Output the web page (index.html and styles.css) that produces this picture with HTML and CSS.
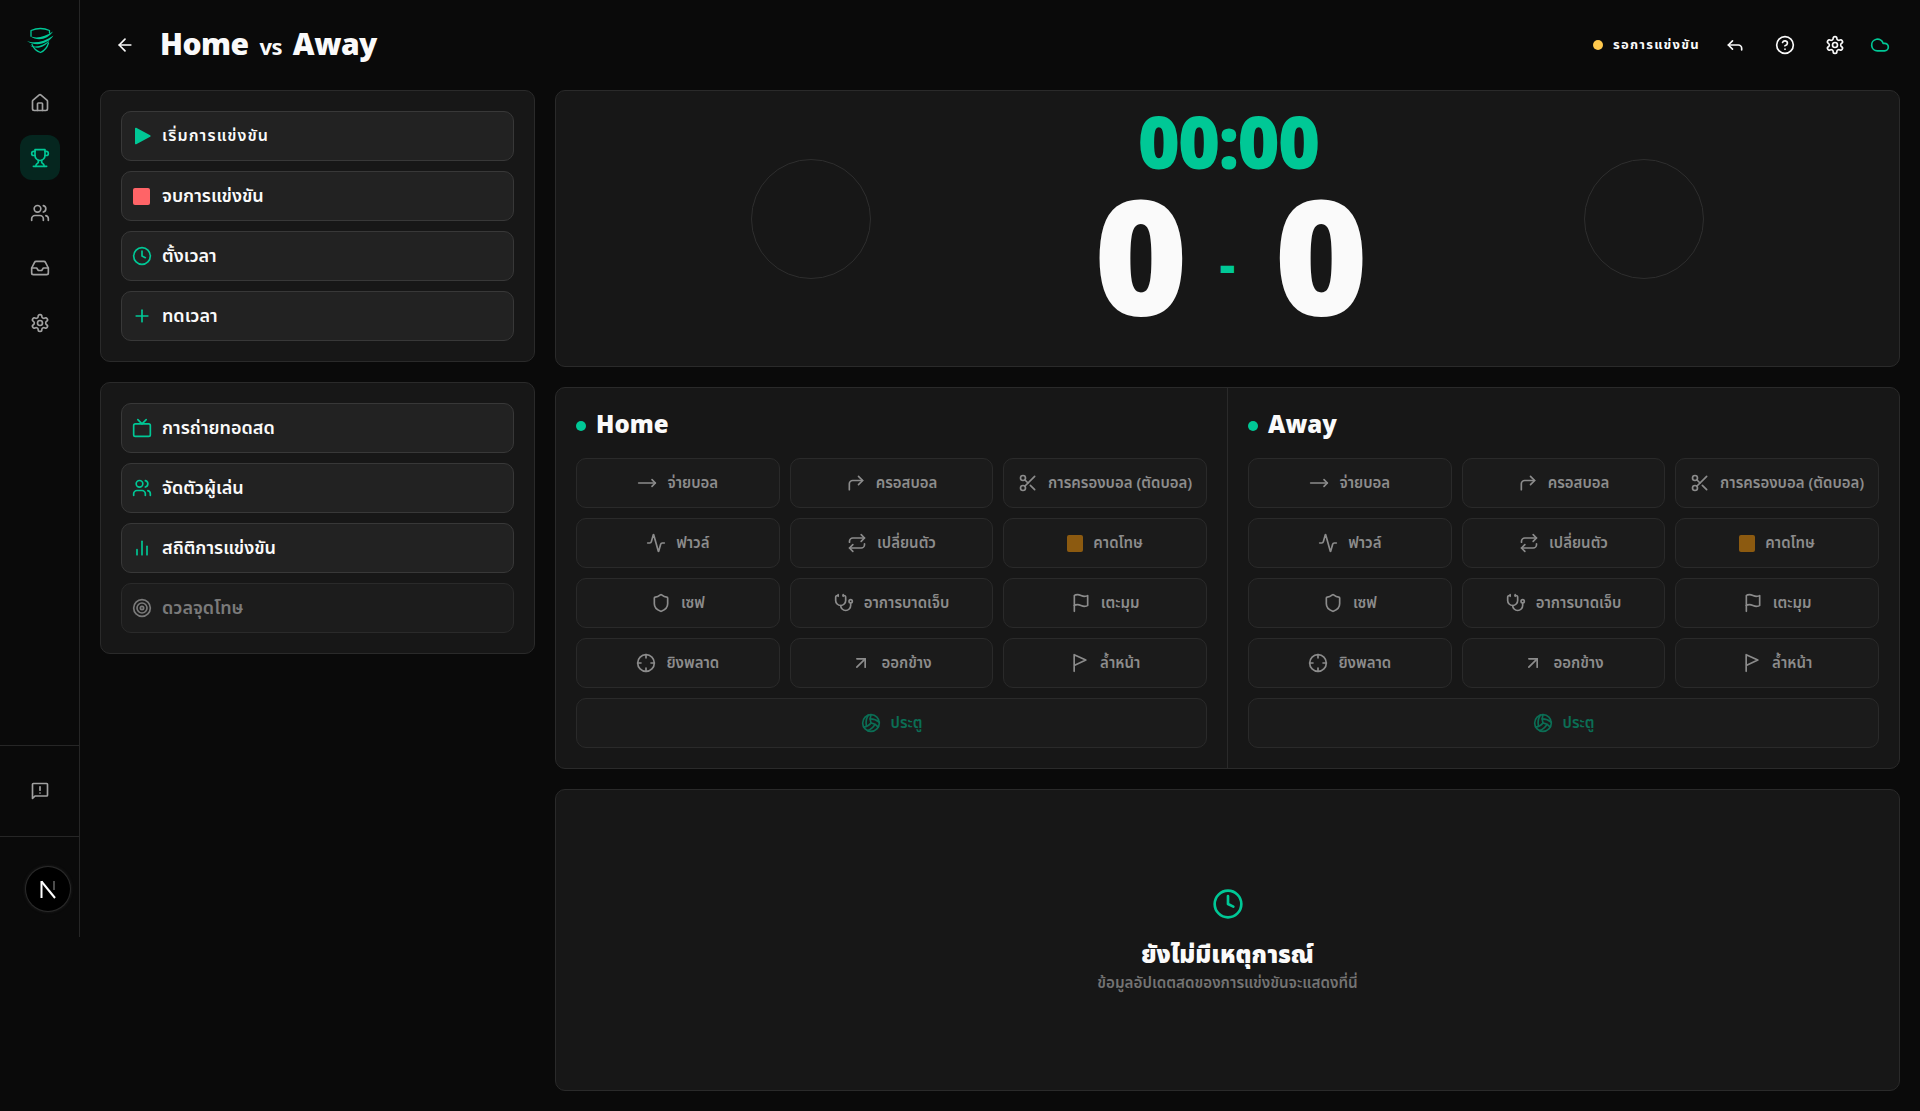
FILE: index.html
```html
<!DOCTYPE html>
<html lang="th">
<head>
  <meta charset="UTF-8">
  <meta name="viewport" content="width=device-width, initial-scale=1.0">
  <title>Home vs Away</title>
  <link rel="stylesheet" href="styles.css">
</head>
<body>

  <!-- Icon sprite -->
  <svg class="sprite" xmlns="http://www.w3.org/2000/svg">
    <symbol id="i-home" viewBox="0 0 24 24"><path d="M15 21v-8a1 1 0 0 0-1-1h-4a1 1 0 0 0-1 1v8"/><path d="M3 10a2 2 0 0 1 .709-1.528l7-5.999a2 2 0 0 1 2.582 0l7 5.999A2 2 0 0 1 21 10v9a2 2 0 0 1-2 2H5a2 2 0 0 1-2-2z"/></symbol>
    <symbol id="i-trophy" viewBox="0 0 24 24"><path d="M6 9H4.5a2.5 2.5 0 0 1 0-5H6"/><path d="M18 9h1.5a2.5 2.5 0 0 0 0-5H18"/><path d="M4 22h16"/><path d="M10 14.66V17c0 .55-.47.98-.97 1.21C7.85 18.75 7 20.24 7 22"/><path d="M14 14.66V17c0 .55.47.98.97 1.21C16.15 18.75 17 20.24 17 22"/><path d="M18 2H6v7a6 6 0 0 0 12 0V2Z"/></symbol>
    <symbol id="i-users" viewBox="0 0 24 24"><path d="M16 21v-2a4 4 0 0 0-4-4H6a4 4 0 0 0-4 4v2"/><circle cx="9" cy="7" r="4"/><path d="M22 21v-2a4 4 0 0 0-3-3.87"/><path d="M16 3.13a4 4 0 0 1 0 7.75"/></symbol>
    <symbol id="i-inbox" viewBox="0 0 24 24"><polyline points="22 12 16 12 14 15 10 15 8 12 2 12"/><path d="M5.45 5.11 2 12v6a2 2 0 0 0 2 2h16a2 2 0 0 0 2-2v-6l-3.45-6.89A2 2 0 0 0 16.76 4H7.24a2 2 0 0 0-1.79 1.11z"/></symbol>
    <symbol id="i-settings" viewBox="0 0 24 24"><path d="M12.22 2h-.44a2 2 0 0 0-2 2v.18a2 2 0 0 1-1 1.73l-.43.25a2 2 0 0 1-2 0l-.15-.08a2 2 0 0 0-2.73.73l-.22.38a2 2 0 0 0 .73 2.73l.15.1a2 2 0 0 1 1 1.72v.51a2 2 0 0 1-1 1.74l-.15.09a2 2 0 0 0-.73 2.73l.22.38a2 2 0 0 0 2.73.73l.15-.08a2 2 0 0 1 2 0l.43.25a2 2 0 0 1 1 1.73V20a2 2 0 0 0 2 2h.44a2 2 0 0 0 2-2v-.18a2 2 0 0 1 1-1.73l.43-.25a2 2 0 0 1 2 0l.15.08a2 2 0 0 0 2.73-.73l.22-.39a2 2 0 0 0-.73-2.73l-.15-.08a2 2 0 0 1-1-1.74v-.5a2 2 0 0 1 1-1.74l.15-.09a2 2 0 0 0 .73-2.73l-.22-.38a2 2 0 0 0-2.73-.73l-.15.08a2 2 0 0 1-2 0l-.43-.25a2 2 0 0 1-1-1.73V4a2 2 0 0 0-2-2z"/><circle cx="12" cy="12" r="3"/></symbol>
    <symbol id="i-feedback" viewBox="0 0 24 24"><path d="M20 3H4a1 1 0 0 0-1 1v17l3-3h14a1 1 0 0 0 1-1V4a1 1 0 0 0-1-1z"/><path d="M12 7v4"/><path d="M12 14.500h.01"/></symbol>
    <symbol id="i-back" viewBox="0 0 24 24"><path d="m12 19-7-7 7-7"/><path d="M19 12H5"/></symbol>
    <symbol id="i-reply" viewBox="0 0 24 24"><polyline points="9 17 4 12 9 7"/><path d="M20 18v-2a4 4 0 0 0-4-4H4"/></symbol>
    <symbol id="i-help" viewBox="0 0 24 24"><circle cx="12" cy="12" r="10"/><path d="M9.09 9a3 3 0 0 1 5.83 1c0 2-3 3-3 3"/><path d="M12 17h.01"/></symbol>
    <symbol id="i-cloud" viewBox="0 0 24 24"><path d="M17.5 19H9a7 7 0 1 1 6.71-9h1.79a4.5 4.5 0 1 1 0 9Z"/></symbol>
    <symbol id="i-play" viewBox="0 0 24 24"><polygon points="4.600 3 21.300 12 4.600 21"/></symbol>
    <symbol id="i-clock" viewBox="0 0 24 24"><circle cx="12" cy="12" r="10"/><polyline points="12 6 12 12 16 14"/></symbol>
    <symbol id="i-plus" viewBox="0 0 24 24"><path d="M5 12h14"/><path d="M12 5v14"/></symbol>
    <symbol id="i-tv" viewBox="0 0 24 24"><rect width="20" height="15" x="2" y="7" rx="2" ry="2"/><polyline points="17 2 12 7 7 2"/></symbol>
    <symbol id="i-chart" viewBox="0 0 24 24"><line x1="18" x2="18" y1="20" y2="10"/><line x1="12" x2="12" y1="20" y2="4"/><line x1="6" x2="6" y1="20" y2="14"/></symbol>
    <symbol id="i-target" viewBox="0 0 24 24"><circle cx="12" cy="12" r="10"/><circle cx="12" cy="12" r="6"/><circle cx="12" cy="12" r="2"/></symbol>
    <symbol id="i-pass" viewBox="0 0 24 24"><path d="M18 8l4 4-4 4"/><path d="M2 12h20"/></symbol>
    <symbol id="i-cross" viewBox="0 0 24 24"><polyline points="15 14 20 9 15 4"/><path d="M4 20v-7a4 4 0 0 1 4-4h12"/></symbol>
    <symbol id="i-scissors" viewBox="0 0 24 24"><circle cx="6" cy="6" r="3"/><path d="M8.12 8.12 12 12"/><path d="M20 4 8.12 15.88"/><circle cx="6" cy="18" r="3"/><path d="M14.8 14.8 20 20"/></symbol>
    <symbol id="i-activity" viewBox="0 0 24 24"><path d="M22 12h-2.48a2 2 0 0 0-1.93 1.46l-2.35 8.36a.25.25 0 0 1-.48 0L9.24 2.18a.25.25 0 0 0-.48 0l-2.35 8.36A2 2 0 0 1 4.49 12H2"/></symbol>
    <symbol id="i-repeat" viewBox="0 0 24 24"><path d="m17 2 4 4-4 4"/><path d="M3 11v-1a4 4 0 0 1 4-4h14"/><path d="m7 22-4-4 4-4"/><path d="M21 13v1a4 4 0 0 1-4 4H3"/></symbol>
    <symbol id="i-shield" viewBox="0 0 24 24"><path d="M20 13c0 5-3.5 7.5-7.66 8.95a1 1 0 0 1-.67-.01C7.5 20.5 4 18 4 13V6a1 1 0 0 1 1-1c2 0 4.5-1.2 6.24-2.72a1.17 1.17 0 0 1 1.52 0C14.51 3.81 17 5 19 5a1 1 0 0 1 1 1z"/></symbol>
    <symbol id="i-stethoscope" viewBox="0 0 24 24"><path d="M11 2v2"/><path d="M5 2v2"/><path d="M5 3H4a2 2 0 0 0-2 2v4a6 6 0 0 0 12 0V5a2 2 0 0 0-2-2h-1"/><path d="M8 15a6 6 0 0 0 12 0v-3"/><circle cx="20" cy="10" r="2"/></symbol>
    <symbol id="i-flag" viewBox="0 0 24 24"><path d="M4 15s1-1 4-1 5 2 8 2 4-1 4-1V3s-1 1-4 1-5-2-8-2-4 1-4 1z"/><line x1="4" x2="4" y1="22" y2="15"/></symbol>
    <symbol id="i-crosshair" viewBox="0 0 24 24"><circle cx="12" cy="12" r="10"/><line x1="22" x2="18" y1="12" y2="12"/><line x1="6" x2="2" y1="12" y2="12"/><line x1="12" x2="12" y1="6" y2="2"/><line x1="12" x2="12" y1="22" y2="18"/></symbol>
    <symbol id="i-out" viewBox="0 0 24 24"><path d="M7 7h10v10"/><path d="M7 17 17 7"/></symbol>
    <symbol id="i-offside" viewBox="0 0 24 24"><path d="M5 22V2l14 6.500-14 6.500"/></symbol>
    <symbol id="i-goal" viewBox="0 0 24 24"><path d="M11.1 7.1a16.55 16.55 0 0 1 10.9 4"/><path d="M12 12a12.6 12.6 0 0 1-8.7 5"/><path d="M16.8 13.6a16.55 16.55 0 0 1-9 7.5"/><path d="M20.7 17a12.8 12.8 0 0 0-8.7-5 13.3 13.3 0 0 1 0-10"/><path d="M6.6 15.6A16.55 16.55 0 0 1 8.9 2.4"/><circle cx="12" cy="12" r="10"/></symbol>
  </svg>

  <!-- Sidebar -->
  <aside class="sidebar">
    <div class="logo">
      <svg viewBox="0 0 28 28" width="28" height="28">
        <g fill="none" stroke="#00c896" stroke-width="1.300" stroke-linecap="round" stroke-linejoin="round">
          <path d="M5 10V4.500C11 2 18 2 23.500 4.500V7"/>
          <path d="M6 18.500C7.500 22.500 10.500 25 14.500 26.500 18 25 21 22 22.500 17"/>
        </g>
        <g fill="#00c896">
          <path d="M4 10C10 13 19 11 27 5.500 22 13 12 16 4 10Z"/>
          <path d="M1 15C8 18 18 16 27.500 9.500 22 18 10 21 1 15Z"/>
          <path d="M4 19.500C11 22 18 19 23.500 14.500 19 21.500 10 24 4 19.500Z"/>
        </g>
      </svg>
    </div>
    <nav class="side-nav">
      <a class="side-link" href="#"><svg class="icon"><use href="#i-home"/></svg></a>
      <a class="side-link active" href="#"><svg class="icon"><use href="#i-trophy"/></svg></a>
      <a class="side-link" href="#"><svg class="icon"><use href="#i-users"/></svg></a>
      <a class="side-link" href="#"><svg class="icon"><use href="#i-inbox"/></svg></a>
      <a class="side-link" href="#"><svg class="icon"><use href="#i-settings"/></svg></a>
    </nav>
    <div class="side-feedback">
      <svg class="icon"><use href="#i-feedback"/></svg>
    </div>
    <div class="side-foot"></div>
  </aside>

  <!-- Dev indicator -->
  <div class="dev-badge">
    <svg viewBox="0 0 20 20" width="20" height="20" fill="none">
      <path d="M3.500 2v17" stroke="#fff" stroke-width="2"/>
      <path d="M3.500 2.500 17 19" stroke="#fff" stroke-width="2"/>
      <path d="M16 2v9" stroke="#666" stroke-width="1.500"/>
    </svg>
  </div>

  <div class="page">
    <header class="topbar">
      <div class="match-title">
        <svg class="icon back"><use href="#i-back"/></svg>
        <h1>Home <span class="vs">vs</span> Away</h1>
      </div>
      <div class="top-actions">
        <span class="status"><span class="status-dot"></span>รอการแข่งขัน</span>
        <svg class="icon"><use href="#i-reply"/></svg>
        <svg class="icon"><use href="#i-help"/></svg>
        <svg class="icon"><use href="#i-settings"/></svg>
        <svg class="icon cloud"><use href="#i-cloud"/></svg>
      </div>
    </header>

    <div class="layout">
      <!-- Left control panels -->
      <div class="left-col">
        <section class="card panel">
          <button class="ctl-btn wide-text"><svg class="icon green solid"><use href="#i-play"/></svg>เริ่มการแข่งขัน</button>
          <button class="ctl-btn"><span class="stop-square"></span>จบการแข่งขัน</button>
          <button class="ctl-btn"><svg class="icon green"><use href="#i-clock"/></svg>ตั้งเวลา</button>
          <button class="ctl-btn"><svg class="icon green"><use href="#i-plus"/></svg>ทดเวลา</button>
        </section>
        <section class="card panel">
          <button class="ctl-btn"><svg class="icon green"><use href="#i-tv"/></svg>การถ่ายทอดสด</button>
          <button class="ctl-btn"><svg class="icon green"><use href="#i-users"/></svg>จัดตัวผู้เล่น</button>
          <button class="ctl-btn"><svg class="icon green"><use href="#i-chart"/></svg>สถิติการแข่งขัน</button>
          <button class="ctl-btn disabled"><svg class="icon"><use href="#i-target"/></svg>ดวลจุดโทษ</button>
        </section>
      </div>

      <div class="right-col">
        <!-- Scoreboard -->
        <section class="card scoreboard">
          <div class="team-logo"></div>
          <div class="score-center">
            <div class="clock">00:00</div>
            <div class="score">
              <span>0</span>
              <span class="score-dash">-</span>
              <span>0</span>
            </div>
          </div>
          <div class="team-logo"></div>
        </section>

        <!-- Team event buttons -->
        <section class="card teams">
          <div class="team">
            <h2 class="team-name"><span class="team-dot"></span>Home</h2>
            <div class="event-grid">
              <button class="ev-btn"><svg class="icon"><use href="#i-pass"/></svg>จ่ายบอล</button>
              <button class="ev-btn"><svg class="icon"><use href="#i-cross"/></svg>ครอสบอล</button>
              <button class="ev-btn"><svg class="icon"><use href="#i-scissors"/></svg>การครองบอล (ตัดบอล)</button>
              <button class="ev-btn"><svg class="icon"><use href="#i-activity"/></svg>ฟาวล์</button>
              <button class="ev-btn"><svg class="icon"><use href="#i-repeat"/></svg>เปลี่ยนตัว</button>
              <button class="ev-btn"><span class="yellow-card"></span>คาดโทษ</button>
              <button class="ev-btn"><svg class="icon"><use href="#i-shield"/></svg>เซฟ</button>
              <button class="ev-btn"><svg class="icon"><use href="#i-stethoscope"/></svg>อาการบาดเจ็บ</button>
              <button class="ev-btn"><svg class="icon"><use href="#i-flag"/></svg>เตะมุม</button>
              <button class="ev-btn"><svg class="icon"><use href="#i-crosshair"/></svg>ยิงพลาด</button>
              <button class="ev-btn"><svg class="icon"><use href="#i-out"/></svg>ออกข้าง</button>
              <button class="ev-btn"><svg class="icon"><use href="#i-offside"/></svg>ล้ำหน้า</button>
              <button class="ev-btn goal"><svg class="icon"><use href="#i-goal"/></svg>ประตู</button>
            </div>
          </div>
          <div class="team">
            <h2 class="team-name"><span class="team-dot"></span>Away</h2>
            <div class="event-grid">
              <button class="ev-btn"><svg class="icon"><use href="#i-pass"/></svg>จ่ายบอล</button>
              <button class="ev-btn"><svg class="icon"><use href="#i-cross"/></svg>ครอสบอล</button>
              <button class="ev-btn"><svg class="icon"><use href="#i-scissors"/></svg>การครองบอล (ตัดบอล)</button>
              <button class="ev-btn"><svg class="icon"><use href="#i-activity"/></svg>ฟาวล์</button>
              <button class="ev-btn"><svg class="icon"><use href="#i-repeat"/></svg>เปลี่ยนตัว</button>
              <button class="ev-btn"><span class="yellow-card"></span>คาดโทษ</button>
              <button class="ev-btn"><svg class="icon"><use href="#i-shield"/></svg>เซฟ</button>
              <button class="ev-btn"><svg class="icon"><use href="#i-stethoscope"/></svg>อาการบาดเจ็บ</button>
              <button class="ev-btn"><svg class="icon"><use href="#i-flag"/></svg>เตะมุม</button>
              <button class="ev-btn"><svg class="icon"><use href="#i-crosshair"/></svg>ยิงพลาด</button>
              <button class="ev-btn"><svg class="icon"><use href="#i-out"/></svg>ออกข้าง</button>
              <button class="ev-btn"><svg class="icon"><use href="#i-offside"/></svg>ล้ำหน้า</button>
              <button class="ev-btn goal"><svg class="icon"><use href="#i-goal"/></svg>ประตู</button>
            </div>
          </div>
        </section>

        <!-- Live feed -->
        <section class="card feed">
          <svg class="icon feed-icon"><use href="#i-clock"/></svg>
          <h3>ยังไม่มีเหตุการณ์</h3>
          <p>ข้อมูลอัปเดตสดของการแข่งขันจะแสดงที่นี่</p>
        </section>
      </div>
    </div>
  </div>

</body>
</html>
```

FILE: styles.css
```css
* {
  box-sizing: border-box;
}

body {
  margin: 0;
  height: 1111px;
  overflow: hidden;
  display: flex;
  align-items: flex-start;
  background-color: #0a0a0a;
  color: #fafafa;
  font-family: "Noto Sans", "Noto Sans Thai", sans-serif;
}

.sprite {
  display: none;
}

.icon {
  width: 20px;
  height: 20px;
  flex-shrink: 0;
  fill: none;
  stroke: currentColor;
  stroke-width: 2;
  stroke-linecap: round;
  stroke-linejoin: round;
}

.icon.green {
  color: #00c896;
}

.icon.solid {
  fill: #00c896;
  stroke: #00c896;
}

/* Sidebar */
.sidebar {
  width: 80px;
  height: 937px;
  flex-shrink: 0;
  display: flex;
  flex-direction: column;
  border-right: 1px solid #262626;
}

.logo {
  height: 80px;
  padding-top: 26px;
  display: flex;
  justify-content: center;
}

.side-nav {
  flex: 1;
  display: flex;
  flex-direction: column;
  align-items: center;
  gap: 10px;
}

.side-link {
  width: 40px;
  height: 45px;
  display: flex;
  align-items: center;
  justify-content: center;
  border-radius: 12px;
  color: #a1a1a1;
}

.side-link.active {
  background: #05261f;
  color: #00c896;
}

.side-feedback {
  height: 92px;
  display: flex;
  align-items: center;
  justify-content: center;
  color: #a1a1a1;
  border-top: 1px solid #262626;
  border-bottom: 1px solid #262626;
}

.side-foot {
  height: 100px;
}

.dev-badge {
  position: fixed;
  left: 26px;
  top: 867px;
  width: 44px;
  height: 44px;
  display: flex;
  align-items: center;
  justify-content: center;
  border-radius: 50%;
  background: #000;
  box-shadow: 0 0 0 1px #2a2a2a, 0 0 3px 1px #222;
}

/* Page */
.page {
  flex: 1;
  height: 100%;
  padding: 0 20px 20px;
  display: flex;
  flex-direction: column;
  min-width: 0;
}

.topbar {
  height: 90px;
  flex-shrink: 0;
  display: flex;
  align-items: center;
  justify-content: space-between;
}

.match-title {
  display: flex;
  align-items: center;
  gap: 25px;
  padding-left: 15px;
}

.back {
  color: #fafafa;
}

h1 {
  margin: -2px 0 0;
  font-size: 30px;
  font-weight: 900;
  line-height: 1;
  letter-spacing: -0.5px;
}

.vs {
  font-size: 22px;
  font-weight: 700;
  margin: 0 3.5px;
}

.top-actions {
  display: flex;
  align-items: center;
  gap: 30px;
  padding-right: 10px;
  color: #fafafa;
}

.top-actions .cloud {
  color: #00c896;
  margin-left: -5px;
}

.status {
  display: flex;
  align-items: center;
  gap: 10px;
  margin-right: -5px;
  font-size: 13px;
  font-weight: 700;
  letter-spacing: 1.3px;
}

.status-dot {
  width: 10px;
  height: 10px;
  border-radius: 50%;
  background: #ffc94d;
}

.layout {
  flex: 1;
  min-height: 0;
  display: flex;
  gap: 20px;
}

.left-col {
  width: 435px;
  flex-shrink: 0;
  display: flex;
  flex-direction: column;
  gap: 20px;
}

.right-col {
  flex: 1;
  min-width: 0;
  display: flex;
  flex-direction: column;
  gap: 20px;
}

.card {
  background: #171717;
  border: 1px solid #2a2a2a;
  border-radius: 10px;
}

.panel {
  padding: 20px;
  display: flex;
  flex-direction: column;
  gap: 10px;
}

.ctl-btn {
  height: 50px;
  padding: 0 10px;
  display: flex;
  align-items: center;
  gap: 10px;
  background: #222;
  border: 1px solid #383838;
  border-radius: 10px;
  color: #fafafa;
  font-family: inherit;
  font-size: 18px;
  font-weight: 600;
  cursor: pointer;
}

.ctl-btn.wide-text {
  letter-spacing: 1.1px;
  font-size: 16px;
}

.ctl-btn.disabled {
  background: #1c1c1c;
  border-color: #2a2a2a;
  color: #7a7a7a;
}

.stop-square {
  width: 17px;
  height: 17px;
  margin: 0 2px 0 1px;
  border-radius: 2px;
  background: #ff6467;
}

/* Scoreboard */
.scoreboard {
  height: 277px;
  flex-shrink: 0;
  padding: 0 195px 0;
  display: flex;
  align-items: flex-start;
  justify-content: space-between;
}

.team-logo {
  width: 120px;
  height: 120px;
  margin-top: 68px;
  border-radius: 50%;
  border: 1px solid #2e2e2e;
}

.score-center {
  display: flex;
  flex-direction: column;
  align-items: center;
}

.clock {
  margin: 14px 0 0 1px;
  font-size: 72px;
  font-weight: 900;
  line-height: 72px;
  letter-spacing: -1.8px;
  color: #00c896;
}

.score {
  display: flex;
  align-items: center;
  gap: 32px;
  margin: -1px 0 0 7px;
  font-size: 160px;
  font-weight: 900;
  line-height: 130px;
}

.score-dash {
  font-size: 48px;
  color: #00c896;
  margin: 23px 7px 0 0;
}

/* Teams */
.teams {
  flex-shrink: 0;
  display: flex;
}

.team {
  flex: 1;
  min-width: 0;
  padding: 20px;
}

.team + .team {
  border-left: 1px solid #2a2a2a;
}

.team-name {
  margin: 0 0 20px;
  height: 30px;
  display: flex;
  align-items: center;
  gap: 10px;
  font-size: 24px;
  font-weight: 900;
}

.team-dot {
  width: 10px;
  height: 10px;
  margin-top: 6px;
  border-radius: 50%;
  background: #00c896;
}

.event-grid {
  display: grid;
  grid-template-columns: repeat(3, 1fr);
  gap: 10px;
}

.ev-btn {
  height: 50px;
  padding: 0 10px;
  display: flex;
  align-items: center;
  justify-content: center;
  gap: 10px;
  background: #1b1b1b;
  border: 1px solid #2a2a2a;
  border-radius: 10px;
  color: #8c8c8c;
  font-family: inherit;
  font-size: 15px;
  font-weight: 600;
  white-space: nowrap;
  cursor: pointer;
}

.ev-btn.goal {
  grid-column: 1 / -1;
  color: #0b6e55;
}

.yellow-card {
  width: 16px;
  height: 17px;
  border-radius: 2px;
  background: #8c5a10;
}

/* Feed */
.feed {
  flex: 1;
  min-height: 0;
  display: flex;
  flex-direction: column;
  align-items: center;
  justify-content: center;
}

.feed-icon {
  width: 32px;
  height: 32px;
  color: #00c896;
  margin-bottom: 18px;
}

.feed h3 {
  margin: 0;
  font-size: 24px;
  font-weight: 900;
  line-height: 32px;
}

.feed p {
  margin: 2.5px 0 0;
  font-size: 15.2px;
  font-weight: 600;
  line-height: 20px;
  color: #737373;
}
```
